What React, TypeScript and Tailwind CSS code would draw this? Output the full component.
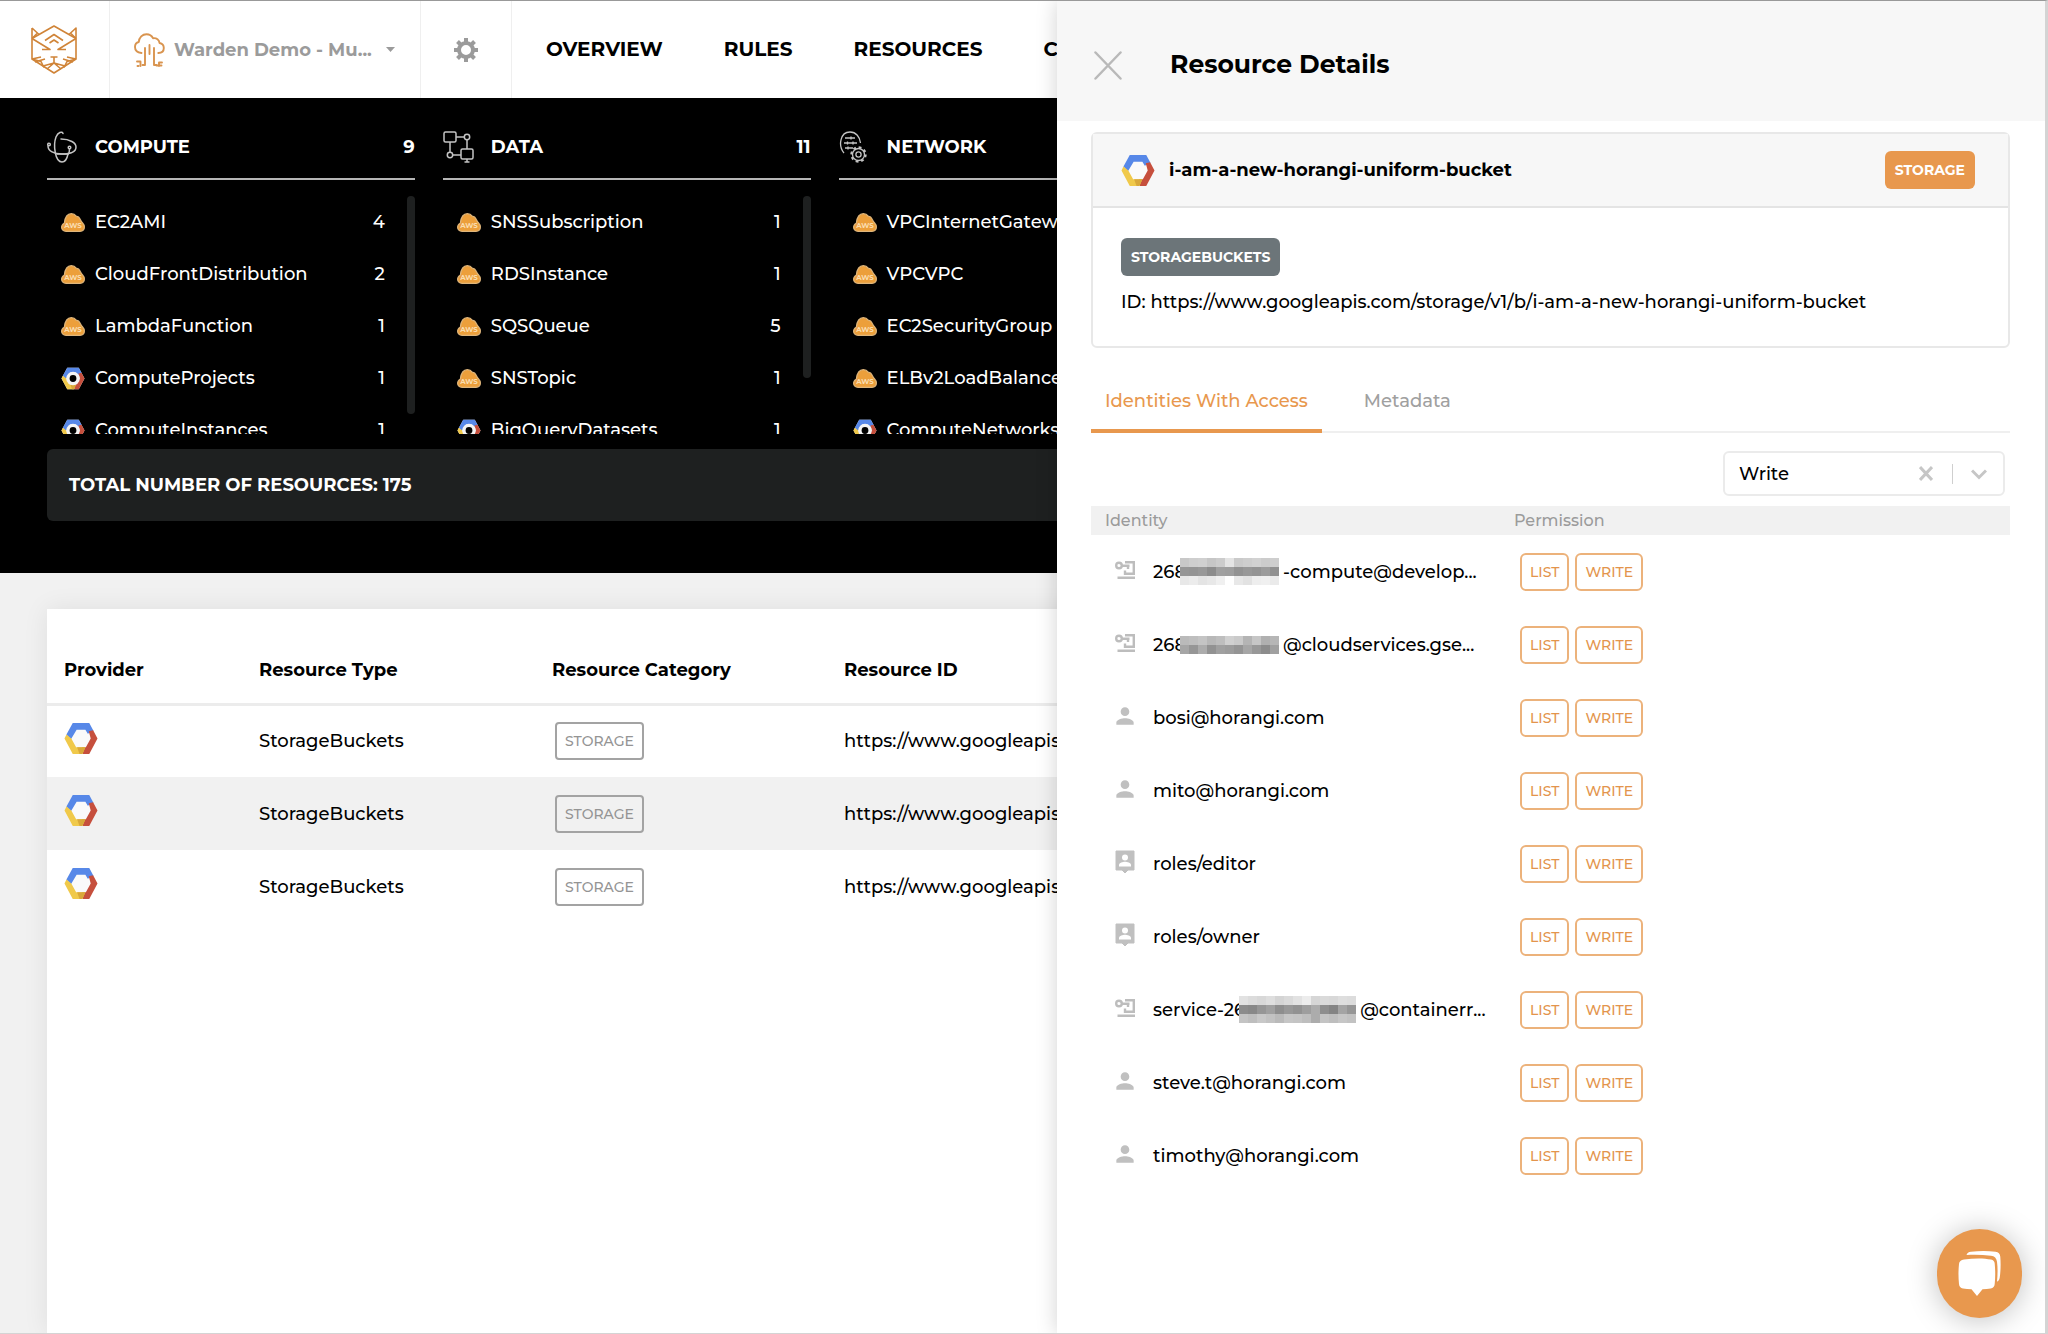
import { useState } from "react";
import { MdPerson } from "react-icons/md";

type Provider = "aws" | "gcp";

interface Category {
  name: string;
  total: number;
  thumb: string;
  items: { provider: Provider; name: string; count: number }[];
}

interface Identity {
  kind: "service" | "user" | "role";
  name: string;
  mask?: number[][];
  rest?: string;
}

const categories: Category[] = [
  {
    name: "COMPUTE",
    total: 9,
    thumb: "h-[218px]",
    items: [
      { provider: "aws", name: "EC2AMI", count: 4 },
      { provider: "aws", name: "CloudFrontDistribution", count: 2 },
      { provider: "aws", name: "LambdaFunction", count: 1 },
      { provider: "gcp", name: "ComputeProjects", count: 1 },
      { provider: "gcp", name: "ComputeInstances", count: 1 },
    ],
  },
  {
    name: "DATA",
    total: 11,
    thumb: "h-[182px]",
    items: [
      { provider: "aws", name: "SNSSubscription", count: 1 },
      { provider: "aws", name: "RDSInstance", count: 1 },
      { provider: "aws", name: "SQSQueue", count: 5 },
      { provider: "aws", name: "SNSTopic", count: 1 },
      { provider: "gcp", name: "BigQueryDatasets", count: 1 },
    ],
  },
  {
    name: "NETWORK",
    total: 14,
    thumb: "h-[182px]",
    items: [
      { provider: "aws", name: "VPCInternetGateway", count: 1 },
      { provider: "aws", name: "VPCVPC", count: 1 },
      { provider: "aws", name: "EC2SecurityGroup", count: 1 },
      { provider: "aws", name: "ELBv2LoadBalancer", count: 1 },
      { provider: "gcp", name: "ComputeNetworks", count: 1 },
    ],
  },
];

const identities: Identity[] = [
  {
    kind: "service",
    name: "268",
    mask: [
      [200, 206, 208, 198, 204, 228, 202, 206, 210, 204, 206],
      [150, 148, 152, 140, 160, 158, 146, 152, 148, 156, 144],
      [232, 236, 228, 232, 240, 255, 232, 226, 238, 240, 234],
    ],
    rest: "-compute@develop...",
  },
  {
    kind: "service",
    name: "268",
    mask: [
      [186, 190, 196, 184, 190, 208, 202, 180, 198, 176, 182],
      [166, 150, 172, 146, 160, 156, 148, 166, 152, 140, 160],
    ],
    rest: "@cloudservices.gse...",
  },
  { kind: "user", name: "bosi@horangi.com" },
  { kind: "user", name: "mito@horangi.com" },
  { kind: "role", name: "roles/editor" },
  { kind: "role", name: "roles/owner" },
  {
    kind: "service",
    name: "service-26",
    mask: [
      [226, 220, 216, 222, 212, 218, 226, 236, 214, 218, 216, 222, 220],
      [140, 136, 150, 160, 142, 152, 146, 158, 172, 142, 132, 164, 150],
      [196, 190, 200, 194, 186, 198, 196, 190, 172, 196, 190, 198, 194],
    ],
    rest: "@containerr...",
  },
  { kind: "user", name: "steve.t@horangi.com" },
  { kind: "user", name: "timothy@horangi.com" },
];

const bucketId = "https://www.googleapis.com/storage/v1/b/i-am-a-new-horangi-uniform-bucket";

function TigerLogo() {
  return (
    <svg width="46" height="50" viewBox="0 0 46 50" fill="none" stroke="#d08438" strokeWidth="1.6" strokeLinejoin="round">
      <path d="M1 3v31l22 14 22-14V3l-7 6.500M1 3l7 6.500M1 13.500 23 1l22 12.500" />
      <path d="M1 13.500l18 11h-8M45 13.500l-18 11h8M1 13.500l5-5M45 13.500l-5-5" />
      <path d="M14 15.500l9-6 9 6M18.500 18l4.500-3 4.500 3" />
      <path d="M19.500 32h7M23 32v6M1 34l9 2.500 3 6M45 34l-9 2.500-3 6M4 37l10-3M42 37l-10-3" />
      <path d="M12 41l11-3 11 3M16 44l7-6 7 6M1 34l9-2M45 34l-9-2" />
    </svg>
  );
}

function TreeIcon() {
  return (
    <svg width="31" height="34" viewBox="0 0 31 34" fill="none" stroke="#d9944f" strokeWidth="1.9" strokeLinecap="round" strokeLinejoin="round">
      <path d="M7.500 20C3.500 19.500 1 17 1 14c0-2.500 1.500-4.500 3.800-5C5 4.500 8.500 1.200 12.500 1.200c3 0 5.300 1.500 6.500 4 3.500-.5 6.300 1.500 6.500 4.800 2.700.5 4.300 2.500 4.300 5 0 2.800-2 5-5.500 5" />
      <path d="M11 15v17H8.500M20 15v17h2.500M15.500 12v9" />
      <path d="M3 28.500h3.500v4.500M3.500 33h1M25 33v-3.500h3M22.500 32.500h5" />
    </svg>
  );
}

function GearIcon() {
  return (
    <svg width="24" height="24" viewBox="0 0 24 24" fill="none" stroke="#9b9b9b">
      <circle cx="12" cy="12" r="7" strokeWidth="4" />
      <g strokeWidth="4">
        <path d="M12 0v4M12 20v4M0 12h4M20 12h4" />
        <path d="M3.500 3.500l3 3M17.500 17.500l3 3M20.500 3.500l-3 3M6.500 17.500l-3 3" />
      </g>
    </svg>
  );
}

function CategoryIcon({ name }: { name: string }) {
  if (name === "COMPUTE") {
    return (
      <svg width="30" height="32" viewBox="0 0 30 32" fill="none" stroke="#c4c4c4" strokeWidth="1.5" strokeLinecap="round">
        <path d="M16 2.500c-1-2.500-5-1.500-7 3.500-3 8-1 25 6 25 3 0 5-3 6-8" />
        <path d="M14 8c9 0 15 4 15 8 0 5-6 7-14 7C7 23 1 20 1 15" />
        <circle cx="2" cy="13.500" r="1.300" />
        <circle cx="22.500" cy="16.500" r="1.300" />
        <path d="M22.500 18c0 2-.5 4-1 5M10 23h11" />
      </svg>
    );
  }
  if (name === "DATA") {
    return (
      <svg width="31" height="32" viewBox="0 0 31 32" fill="none" stroke="#c4c4c4" strokeWidth="1.5">
        <rect x="1" y="1" width="12" height="10" rx="1.500" />
        <rect x="18" y="18" width="12" height="10" rx="1.500" />
        <circle cx="24" cy="6" r="2.700" />
        <circle cx="7" cy="24" r="2.700" />
        <path d="M13 6h8.300M24 8.700V18M7 11v10.300M9.700 24H18M24 28v3M21.500 31h5" />
      </svg>
    );
  }
  return (
    <svg width="28" height="32" viewBox="0 0 28 32" fill="none" stroke="#c4c4c4" strokeWidth="1.3">
      <path d="M5 22C-1 15 1 1 11 1c6 0 10 5 10.500 11" />
      <path d="M6 7h10M5 12h13M6 17h8" />
      <path d="M12 5.500v3M8.500 10.500v3M14 10.500v3M9 15.500v3" />
      <circle cx="19.500" cy="23.500" r="2.600" />
      <circle cx="19.500" cy="23.500" r="6" />
      <circle cx="19.500" cy="23.500" r="7.200" strokeWidth="2" strokeDasharray="2.800 2.850" />
    </svg>
  );
}

function AwsIcon() {
  return (
    <svg width="24" height="19" viewBox="0 0 24 19">
      <path
        d="M5 18.300c-2.700 0-4.400-1.800-4.400-4 0-1.800 1-3.300 2.700-4.100C4 4.500 6.500.7 10.300.7c2.300 0 3.800.9 4.900 2.500 1.800.2 3.200 1.100 4 3 .6 1.300 1.300 2.600 2.400 3.800 1.200 1.300 1.800 2.600 1.800 4.100 0 2.500-1.800 4.200-4.400 4.200z"
        fill="#ec9f3b"
        stroke="#dfb67c"
        strokeWidth="1.2"
      />
      <text x="12" y="14.500" textAnchor="middle" fontSize="7" fontWeight="700" fill="#fadcae">
        AWS
      </text>
    </svg>
  );
}

// dark variant fills the ring around a black centre
function GcpIcon({ className, dark = false }: { className: string; dark?: boolean }) {
  return (
    <svg className={className} viewBox="0 0 34 34">
      <path d="M8.500 1h17L34 17l-8.500 16h-17L0 17z" fill={dark ? "#f4f4f4" : "#fafafa"} />
      <path d="M8.500 1h17l4.300 8-5.800 3-2.500-4h-9l-6 10L2 13z" fill="#5788e8" />
      <path d="M25 9.500l4.500-1L34 17l-8.500 16H19l-1-7h4l5-9z" fill="#c64f3d" />
      <path d="M2 13l5 4 5 9h9.500L18.500 33h-10L0 17z" fill="#f0c94a" />
      <path d="M13 26h8.500L18.500 33h-3z" fill="#d9a83a" />
      {dark && <circle cx="17" cy="17" r="10" fill="#f4f4f4" />}
      {dark && <circle cx="17" cy="17" r="5" fill="#000" />}
    </svg>
  );
}

function ServiceIcon() {
  return (
    <svg className="shrink-0" width="20" height="18" viewBox="0 0 20 18" fill="none" stroke="#bdbdbd" strokeWidth="2.400">
      <circle cx="4" cy="4.500" r="2.800" />
      <path d="M7 4.800h7.500M13 4v4M10 1.200h8.800v11.600h-8.800V9.500M2.500 16.800H20" />
    </svg>
  );
}

function RoleIcon() {
  return (
    <svg className="shrink-0" width="20" height="24" viewBox="0 0 20 24">
      <path d="M1 1h18v19h-6l-3 3-3-3H1z" fill="#c0c0c0" stroke="#c0c0c0" strokeLinejoin="round" />
      <circle cx="10" cy="7.500" r="3" fill="#fff" />
      <path d="M4 16.500v-1.500c0-2 4-3.200 6-3.200s6 1.200 6 3.200v1.500z" fill="#fff" />
    </svg>
  );
}

function IdentityIcon({ kind }: { kind: Identity["kind"] }) {
  if (kind === "service") return <ServiceIcon />;
  if (kind === "role") return <RoleIcon />;
  return <MdPerson className="size-[26px] shrink-0 text-[#c0c0c0]" />;
}

function Mask({ rows }: { rows: number[][] }) {
  const cols = rows[0].length;
  return (
    <svg className="relative -ml-[6px] shrink-0" width={cols * 9} height={rows.length * 9} shapeRendering="crispEdges">
      {rows.map((row, y) =>
        row.map((v, x) => (
          <rect key={`${x}-${y}`} x={x * 9} y={y * 9} width="9" height="9" fill={`rgb(${v},${v},${v})`} />
        ))
      )}
    </svg>
  );
}

function CategoryColumn({ category }: { category: Category }) {
  return (
    <section>
      <div className="flex h-[82px] items-center border-b-2 border-[#b5b5b5] pt-[18px] text-lg font-bold">
        <div className="w-12">
          <CategoryIcon name={category.name} />
        </div>
        <h2 className="flex-1">{category.name}</h2>
        <span>{category.total}</span>
      </div>
      <div className="flex h-[254px] overflow-hidden pt-4">
        <ul className="flex-1 pl-[14px]">
          {category.items.map((item) => (
            <li key={item.name} className="flex h-[52px] items-center text-lg font-medium">
              <span className="w-[34px]">
                {item.provider === "aws" ? <AwsIcon /> : <GcpIcon dark className="h-[23px] w-6" />}
              </span>
              <span className="flex-1">{item.name}</span>
              <span>{item.count}</span>
            </li>
          ))}
        </ul>
        <div className={`ml-[22px] w-2 rounded-full bg-[#1e2020] ${category.thumb}`} />
      </div>
    </section>
  );
}

export default function App() {
  const [open, setOpen] = useState(true);
  const [tab, setTab] = useState("Identities With Access");
  const [permission, setPermission] = useState("Write");

  return (
    <div className="relative flex min-h-screen flex-col overflow-hidden border-t border-r-[3px] border-b border-t-[#999] border-r-[#d4d4d4] border-b-[#d4d4d4] bg-[#f1f1f1] font-['Montserrat','Inter',sans-serif] text-black">
      <header className="flex h-[97px] shrink-0 bg-white">
        <a href="#" aria-label="Home" className="flex w-[110px] items-center border-r border-[#efefef] pl-[31px]">
          <TigerLogo />
        </a>
        <button className="flex w-[311px] items-center border-r border-[#efefef] pl-6 text-lg font-bold text-[#9b9b9b]">
          <TreeIcon />
          <span className="ml-[9px]">Warden Demo - Mu...</span>
          <svg className="ml-[14px]" width="9" height="5" viewBox="0 0 9 5">
            <path d="M0 0h9L4.500 5z" fill="#9b9b9b" />
          </svg>
        </button>
        <button aria-label="Settings" className="flex w-[91px] items-center justify-center border-r border-[#efefef]">
          <GearIcon />
        </button>
        <nav className="flex items-center gap-[61px] pb-[2px] pl-[34px] text-xl font-bold">
          <a href="#overview">OVERVIEW</a>
          <a href="#rules">RULES</a>
          <a href="#resources">RESOURCES</a>
          <a href="#compliance">COMPLIANCE</a>
        </nav>
      </header>

      <div className="shrink-0 bg-black px-[47px] pb-[52px] text-white">
        <div className="grid grid-cols-5 gap-7">
          {categories.map((c) => (
            <CategoryColumn key={c.name} category={c} />
          ))}
        </div>
        <div className="mt-[15px] flex h-[72px] items-center rounded-md bg-[#1e2020] px-[22px] text-lg font-bold">
          TOTAL NUMBER OF RESOURCES: 175
        </div>
      </div>

      <main className="mx-[47px] mt-9 flex-1 bg-white pt-7 shadow-[0_0_24px_rgba(0,0,0,0.08)]">
        <table className="w-full table-fixed text-left text-lg font-medium">
          <colgroup>
            <col className="w-[195px]" />
            <col className="w-[293px]" />
            <col className="w-[292px]" />
            <col />
          </colgroup>
          <thead>
            <tr className="h-[67px] border-b-[3px] border-[#ececec]">
              <th className="px-[17px] font-bold">Provider</th>
              <th className="px-[17px] font-bold">Resource Type</th>
              <th className="px-[17px] font-bold">Resource Category</th>
              <th className="px-[17px] font-bold">Resource ID</th>
            </tr>
          </thead>
          <tbody>
            {[0, 1, 2].map((i) => (
              <tr key={i} className="h-[73px] even:bg-[#f1f1f1]">
                <td className="px-[17px] pb-[6px]">
                  <GcpIcon className="h-[33px] w-[34px]" />
                </td>
                <td className="px-[17px]">StorageBuckets</td>
                <td className="px-5">
                  <span className="inline-flex h-[38px] items-center rounded border-2 border-[#a3a3a3] px-2 text-sm text-[#949494]">
                    STORAGE
                  </span>
                </td>
                <td className="px-[17px]">{bucketId}</td>
              </tr>
            ))}
          </tbody>
        </table>
      </main>

      {open && (
        <aside className="absolute inset-y-0 right-0 w-[988px] max-w-full bg-white shadow-[0_0_20px_rgba(0,0,0,0.18)]">
          <div className="flex h-[120px] items-center bg-[#f7f7f7] pt-2 pl-[37px]">
            <button aria-label="Close" onClick={() => setOpen(false)}>
              <svg width="28" height="29" viewBox="0 0 28 29" stroke="#b9b9b9" strokeWidth="2.5" strokeLinecap="round">
                <path d="M1.500 1.500l25 26M26.500 1.500l-25 26" />
              </svg>
            </button>
            <h1 className="ml-12 text-[25px] font-bold">Resource Details</h1>
          </div>

          <div className="pt-[11px] pr-[35px] pl-[34px]">
            <div className="rounded-md border-2 border-[#e8e8e8]">
              <div className="flex h-[74px] items-center border-b-2 border-[#e4e4e4] bg-[#f7f7f7] pr-[33px] pl-7">
                <GcpIcon className="h-[33px] w-[34px]" />
                <h2 className="ml-[14px] flex-1 text-lg font-bold">i-am-a-new-horangi-uniform-bucket</h2>
                <span className="flex h-[38px] items-center rounded-md bg-[#e8984e] px-[10px] text-sm font-bold text-white">
                  STORAGE
                </span>
              </div>
              <div className="px-7 pt-[30px] pb-[30px]">
                <span className="inline-flex h-[38px] items-center rounded-md bg-[#6c7579] px-[10px] text-sm font-bold text-white">
                  STORAGEBUCKETS
                </span>
                <p className="mt-3 text-lg font-medium">ID: {bucketId}</p>
              </div>
            </div>

            <div role="tablist" className="mt-5 flex h-[65px] gap-7 border-b-2 border-[#efefef] text-lg font-medium">
              {["Identities With Access", "Metadata"].map((t) => (
                <button
                  key={t}
                  role="tab"
                  aria-selected={tab === t}
                  onClick={() => setTab(t)}
                  className={`-mb-[2px] border-b-4 px-[14px] pt-1 ${
                    tab === t ? "border-[#e8984e] text-[#e8984e]" : "border-transparent text-[#a0a0a0]"
                  }`}
                >
                  {t}
                </button>
              ))}
            </div>

            <div className="relative mt-[18px] mr-[5px] ml-auto w-[282px]">
              <select
                aria-label="Permission filter"
                value={permission}
                onChange={(e) => setPermission(e.target.value)}
                className="h-[45px] w-full appearance-none rounded-md border-2 border-[#ebebeb] bg-white pl-[14px] text-lg font-medium"
              >
                <option value=""></option>
                <option>Write</option>
              </select>
              <button aria-label="Clear" onClick={() => setPermission("")} className="absolute top-[15px] right-[72px]">
                <svg width="14" height="15" viewBox="0 0 14 15" stroke="#c6c6c6" strokeWidth="3">
                  <path d="M1 1l12 13M13 1L1 14" />
                </svg>
              </button>
              <span className="pointer-events-none absolute top-[13px] right-[52px] h-5 w-px bg-[#cfcfcf]" />
              <svg className="pointer-events-none absolute top-[18px] right-[18px]" width="16" height="11" viewBox="0 0 16 11" fill="none" stroke="#c6c6c6" strokeWidth="3">
                <path d="M1 1.500l7 7 7-7" />
              </svg>
            </div>

            <table className="mt-[10px] w-full table-fixed text-left">
              <colgroup>
                <col className="w-[409px]" />
                <col />
              </colgroup>
              <thead>
                <tr className="h-[29px] bg-[#f1f1f1] text-base text-[#9b9b9b]">
                  <th className="px-[14px] font-medium">Identity</th>
                  <th className="px-[14px] font-medium">Permission</th>
                </tr>
              </thead>
              <tbody>
                {identities.map((identity, i) => (
                  <tr key={i} className="h-[73px] text-lg font-medium">
                    <td className="pl-6">
                      <div className="flex items-center">
                        <span className="flex w-[38px] shrink-0 pb-1">
                          <span className="flex w-5 justify-center">
                            <IdentityIcon kind={identity.kind} />
                          </span>
                        </span>
                        <span>{identity.name}</span>
                        {identity.mask && <Mask rows={identity.mask} />}
                        {identity.rest && <span className="pl-1">{identity.rest}</span>}
                      </div>
                    </td>
                    <td className="pl-5">
                      <div className="flex gap-[6px]">
                        {["LIST", "WRITE"].map((p) => (
                          <span key={p} className="flex h-[38px] items-center rounded-md border-2 border-[#ecb27b] px-2 text-sm text-[#e3944c]">
                            {p}
                          </span>
                        ))}
                      </div>
                    </td>
                  </tr>
                ))}
              </tbody>
            </table>
          </div>
        </aside>
      )}

      <button
        aria-label="Open chat"
        className="absolute right-[23px] bottom-[15px] flex h-[89px] w-[85px] items-center justify-center rounded-full bg-[#e8984e] shadow-[0_2px_30px_rgba(0,0,0,0.25)]"
      >
        <svg width="46" height="48" viewBox="0 0 46 48" fill="#fff">
          <path d="M7 9.500c10-1.500 20-1.500 27 0 2.500.5 3.500 2 3.700 4 .7 7 .7 14 0 20.500-.2 2.500-1.500 4-4 4.500-2.500.4-5.500.6-8.200.8L20 46l-5.500-6.700c-3-.2-6-.4-8.500-.8-2.500-.5-3.800-2-4-4.500-.7-6.500-.7-13.500 0-20 .2-2.500 2-4 5-4.500z" />
          <path d="M9.500 5C10 3 11.500 2 14 1.700c8-1 17-1 24.500 0 3 .4 4.500 2 4.800 5 .6 8 .3 15-.6 21-.3 2-1.200 3.300-2.700 4 .7-7 .8-14 0-20-.4-3.500-2.500-5.700-6-6-8-.9-16-1-24.500-.7z" />
        </svg>
      </button>
    </div>
  );
}
